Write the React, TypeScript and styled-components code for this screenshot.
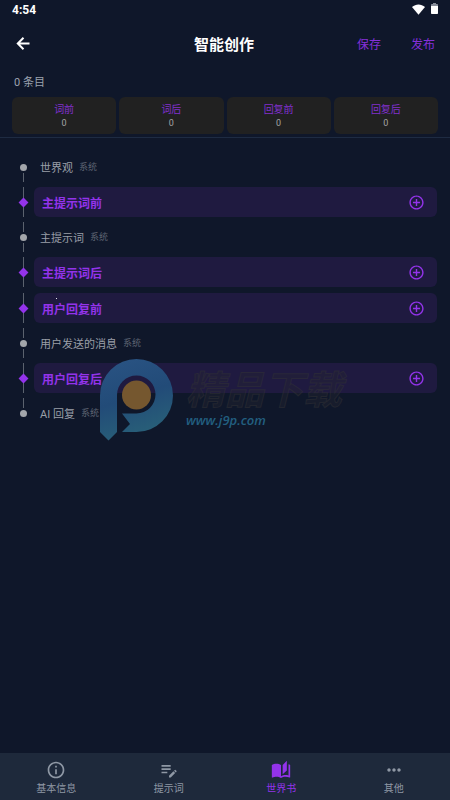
import React from "react";
import styled, { createGlobalStyle } from "styled-components";
import {
  MdAddCircleOutline,
  MdAutoStories,
  MdEditNote,
  MdInfoOutline,
  MdMoreHoriz,
} from "react-icons/md";

const ACCENT = "#9333ea";

const GlobalStyle = createGlobalStyle`
  * { box-sizing: border-box; }
  body {
    margin: 0;
    background: #0f172a;
    font-family: Roboto, "Noto Sans CJK SC", sans-serif;
  }
  button { border: 0; padding: 0; background: none; font: inherit; cursor: pointer; }
  svg { display: block; }
`;

const Screen = styled.div`
  position: relative;
  display: flex;
  flex-direction: column;
  min-height: 100vh;
  background: #0f172a;
`;

const StatusBar = styled.div`
  display: flex;
  align-items: center;
  justify-content: space-between;
  height: 20px;
  padding: 0 12px;
  color: #fff;
  font-size: 12px;
  font-weight: 700;
  line-height: 20px;
`;

const StatusIcons = styled.div`
  display: flex;
  align-items: center;
  gap: 6px;
  padding-bottom: 2px;
`;

const AppBar = styled.header`
  display: grid;
  grid-template-columns: 1fr auto 1fr;
  align-items: center;
  height: 48px;
  padding: 0 15px 0 13px;
`;

const BackButton = styled.button`
  justify-self: start;
  color: #fff;
`;

const Title = styled.h1`
  margin: 0;
  padding-top: 2px;
  color: #fff;
  font-size: 15px;
  font-weight: 700;
  line-height: 24px;
`;

const Actions = styled.div`
  display: flex;
  justify-self: end;
  gap: 30px;
  padding-top: 2px;
`;

const TextButton = styled.button`
  && {
    color: ${ACCENT};
    font-size: 12px;
    line-height: 20px;
    opacity: 0.9;
  }
`;

const Summary = styled.section`
  padding: 5px 12px 3px;
  border-bottom: 1px solid #1e2b42;
`;

const Count = styled.p`
  margin: 0;
  padding: 0 2px 4px;
  color: #9ca3af;
  font-size: 11px;
  line-height: 20px;
`;

const CardGrid = styled.div`
  display: grid;
  grid-template-columns: repeat(4, 1fr);
  gap: 3px;
`;

const Card = styled.div`
  display: flex;
  flex-direction: column;
  align-items: center;
  padding: 5px 0 4px;
  border-radius: 6px;
  background: #212121;
`;

const CardLabel = styled.span`
  color: ${ACCENT};
  font-size: 10px;
  line-height: 15px;
  opacity: 0.85;
`;

const CardValue = styled.span`
  color: #a3a3a3;
  font-size: 9px;
  line-height: 13px;
`;

const Timeline = styled.ol`
  display: flex;
  flex: 1;
  flex-direction: column;
  margin: 0;
  padding: 12px 13px 12px 12px;
  list-style: none;
`;

const Row = styled.li<{ $slot?: boolean }>`
  position: relative;
  display: flex;
  height: 30px;
  margin: ${(p) => (p.$slot ? "3px 0" : "2px 0")};
`;

const Rail = styled.div`
  display: flex;
  flex: none;
  flex-direction: column;
  align-items: center;
  width: 22px;
`;

const Line = styled.span<{ $hidden?: boolean }>`
  flex: 1;
  width: 1px;
  background: #5b626e;
  visibility: ${(p) => (p.$hidden ? "hidden" : "visible")};
`;

const Dot = styled.span`
  width: 7px;
  height: 7px;
  margin: 2px 0;
  border-radius: 50%;
  background: #a3a6ab;
`;

const Diamond = styled.span`
  width: 7px;
  height: 7px;
  margin: 1px 0;
  background: ${ACCENT};
  transform: rotate(45deg);
`;

const SystemLabel = styled.div`
  display: flex;
  align-items: center;
  gap: 6px;
  padding: 3px 0 0 6px;
  color: #9a9fa8;
  font-size: 11px;
  line-height: 20px;
`;

const Tag = styled.span`
  padding-bottom: 4px;
  color: #5d6472;
  font-size: 9px;
  line-height: 16px;
`;

const SlotBox = styled.div`
  display: flex;
  flex: 1;
  align-items: center;
  justify-content: space-between;
  padding: 0 12px 0 8px;
  border-radius: 6px;
  background: #1f1a40;
  color: ${ACCENT};
  font-size: 12px;
  font-weight: 700;
  line-height: 20px;
`;

const SlotName = styled.span`
  padding-top: 3px;
`;

const AddButton = styled.button`
  && {
    color: ${ACCENT};
    font-size: 17px;
  }
`;

const Speck = styled.span`
  position: absolute;
  top: 5px;
  left: 44px;
  width: 1px;
  height: 1px;
  background: #e5e7eb;
`;

const TabBar = styled.nav`
  display: grid;
  grid-template-columns: repeat(4, 1fr);
  height: 47px;
  background: #1e293b;
`;

const Tab = styled.button<{ $active?: boolean }>`
  display: flex;
  flex-direction: column;
  align-items: center;
  padding-top: 7px;
  color: ${(p) => (p.$active ? ACCENT : "#8f98a5")};
  svg { font-size: 20px; }
`;

const TabLabel = styled.span`
  padding-top: 1px;
  font-size: 10px;
  line-height: 16px;
`;

const Watermark = styled.div`
  position: absolute;
  top: 358px;
  left: 99px;
  display: flex;
  gap: 11px;
  pointer-events: none;
`;

const WatermarkText = styled.div`
  display: flex;
  flex-direction: column;
  padding-top: 12px;
`;

const WatermarkName = styled.span`
  color: rgba(38, 38, 48, 0.4);
  font-size: 39px;
  font-style: italic;
  font-weight: 700;
  line-height: 42px;
  -webkit-text-stroke: 1px rgba(50, 50, 54, 0.5);
`;

const WatermarkSite = styled.span`
  color: #225f80;
  font-family: "Open Sans", sans-serif;
  font-size: 13px;
  font-style: italic;
  font-weight: 600;
  line-height: 16px;
`;

type Entry = { label: string; slot?: boolean; speck?: boolean };

const entries: Entry[] = [
  { label: "世界观" },
  { label: "主提示词前", slot: true },
  { label: "主提示词" },
  { label: "主提示词后", slot: true },
  { label: "用户回复前", slot: true, speck: true },
  { label: "用户发送的消息" },
  { label: "用户回复后", slot: true },
  { label: "AI 回复" },
];

const counts = ["词前", "词后", "回复前", "回复后"];

const tabs = [
  { label: "基本信息", Icon: MdInfoOutline },
  { label: "提示词", Icon: MdEditNote },
  { label: "世界书", Icon: MdAutoStories, active: true },
  { label: "其他", Icon: MdMoreHoriz },
];

function BackIcon() {
  return (
    <svg width="20" height="20" viewBox="0 0 20 20" aria-hidden="true">
      <path
        d="M16.500 9.500H5M10.500 3.800L4.800 9.500L10.500 15.200"
        fill="none"
        stroke="currentColor"
        strokeWidth="2"
      />
    </svg>
  );
}

function WifiIcon() {
  return (
    <svg width="13" height="11" viewBox="0 0 13 11" aria-hidden="true">
      <path d="M0 3C3.8-.5 9.200-.5 13 3L6.500 10.800Z" fill="#fff" />
    </svg>
  );
}

function BatteryIcon() {
  return (
    <svg width="7" height="12" viewBox="0 0 7 12" aria-hidden="true">
      <path d="M2 0h3v1h1.200q.8 0 .8.800V3H0V1.800Q0 1 .8 1H2Z" fill="#858b98" />
      <path d="M0 3h7v7.200q0 .8-.8.800H.8Q0 11 0 10.200Z" fill="#fff" />
    </svg>
  );
}

function BrandMark() {
  return (
    <svg width="76" height="84" viewBox="0 0 76 84" aria-hidden="true">
      <defs>
        <linearGradient id="brand" x1="0" y1="0" x2="0.3" y2="1">
          <stop offset="0" stopColor="#2a5484" />
          <stop offset="0.55" stopColor="#224b78" />
          <stop offset="1" stopColor="#285f78" />
        </linearGradient>
      </defs>
      <path
        d="M37.500 17.500A19.500 19.500 0 0 0 18 37V74L9.500 82.500L1 74V37.500A36.500 36.500 0 1 1 37.500 74H23L31 66L23 55.500H37.500A19 19 0 0 0 37.500 17.500Z"
        fill="url(#brand)"
      />
      <circle cx="37.500" cy="37" r="14.500" fill="#75572f" />
    </svg>
  );
}

export default function App() {
  return (
    <>
      <GlobalStyle />
      <Screen>
        <StatusBar>
          <span>4:54</span>
          <StatusIcons>
            <WifiIcon />
            <BatteryIcon />
          </StatusIcons>
        </StatusBar>
        <AppBar>
          <BackButton aria-label="返回">
            <BackIcon />
          </BackButton>
          <Title>智能创作</Title>
          <Actions>
            <TextButton>保存</TextButton>
            <TextButton>发布</TextButton>
          </Actions>
        </AppBar>
        <Summary>
          <Count>0 条目</Count>
          <CardGrid>
            {counts.map((label) => (
              <Card key={label}>
                <CardLabel>{label}</CardLabel>
                <CardValue>0</CardValue>
              </Card>
            ))}
          </CardGrid>
        </Summary>
        <Timeline>
          {entries.map(({ label, slot, speck }, i) => (
            <Row key={label} $slot={slot}>
              <Rail>
                <Line $hidden={i === 0} />
                {slot ? <Diamond /> : <Dot />}
                <Line $hidden={i === entries.length - 1} />
              </Rail>
              {slot ? (
                <SlotBox>
                  <SlotName>{label}</SlotName>
                  <AddButton aria-label={`添加到${label}`}>
                    <MdAddCircleOutline />
                  </AddButton>
                </SlotBox>
              ) : (
                <SystemLabel>
                  {label}
                  <Tag>系统</Tag>
                </SystemLabel>
              )}
              {speck && <Speck />}
            </Row>
          ))}
        </Timeline>
        <TabBar>
          {tabs.map(({ label, Icon, active }) => (
            <Tab key={label} $active={active} aria-current={active ? "page" : undefined}>
              <Icon />
              <TabLabel>{label}</TabLabel>
            </Tab>
          ))}
        </TabBar>
        <Watermark>
          <BrandMark />
          <WatermarkText>
            <WatermarkName>精品下载</WatermarkName>
            <WatermarkSite>www.j9p.com</WatermarkSite>
          </WatermarkText>
        </Watermark>
      </Screen>
    </>
  );
}
